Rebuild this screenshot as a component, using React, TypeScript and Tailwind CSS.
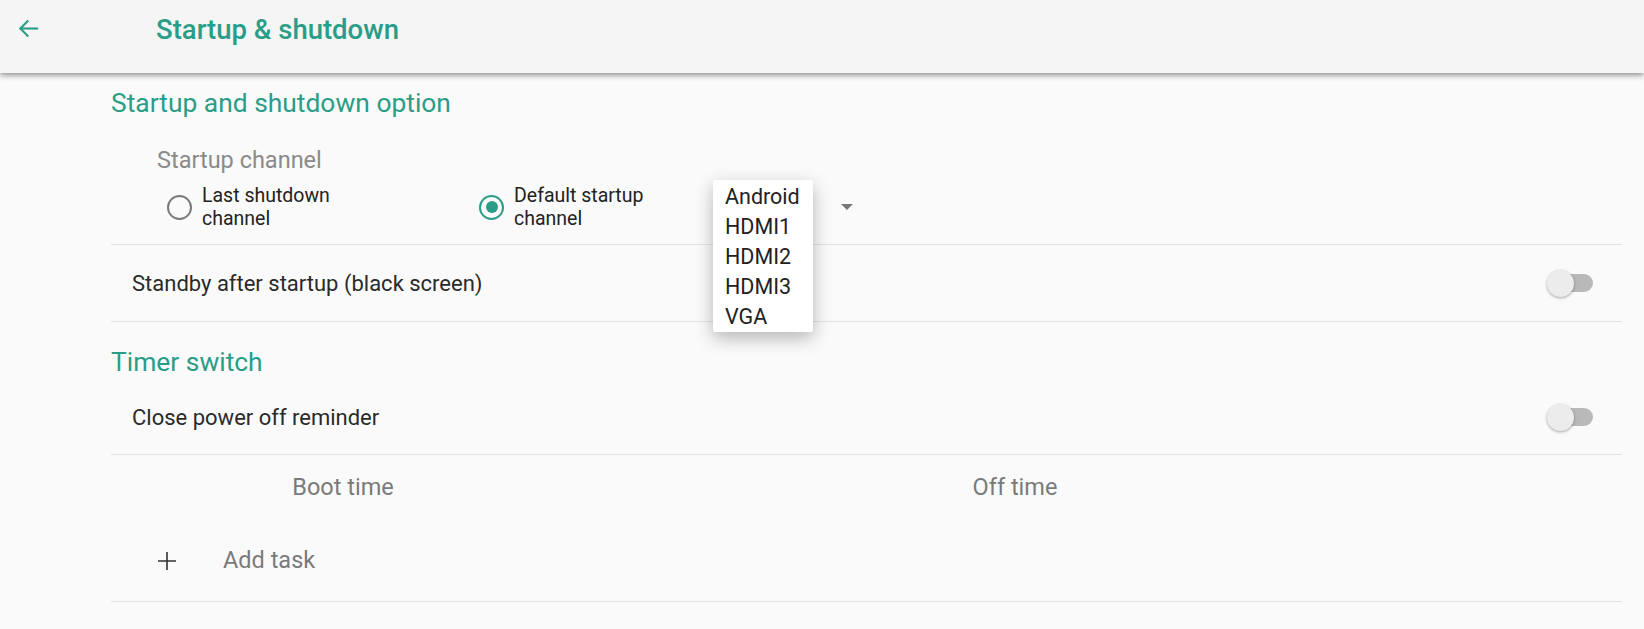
import React from 'react';

const teal = 'text-[#2a9d86]';

const Toggle: React.FC = () => (
  <div className="relative w-[46px] h-[28px] flex items-center">
    <div className="absolute right-0 w-[38px] h-[18px] rounded-full bg-[#b9b9b9]" />
    <div className="absolute left-0 w-[27px] h-[27px] rounded-full bg-[#ececec] shadow-[0_1px_3px_rgba(0,0,0,0.35)]" />
  </div>
);

const Divider: React.FC = () => <div className="h-px bg-[#e3e3e3]" />;

const Radio: React.FC<{ checked?: boolean; label: string[] }> = ({ checked, label }) => (
  <div className="flex items-center">
    <div
      className={
        checked
          ? 'w-[25px] h-[25px] rounded-full border-[2.5px] border-[#2a9d86] flex items-center justify-center'
          : 'w-[25px] h-[25px] rounded-full border-[2.5px] border-[#7a7a7a]'
      }
    >
      {checked && <div className="w-[12px] h-[12px] rounded-full bg-[#2a9d86]" />}
    </div>
    <div className="ml-[10px] text-[19.5px] leading-[23px] text-[#222]">
      {label.map(l => (
        <div key={l}>{l}</div>
      ))}
    </div>
  </div>
);

export default function App() {
  return (
    <div className="w-full h-[629px] bg-[#fafafa] overflow-hidden" style={{ fontFamily: 'Roboto, "Noto Sans", sans-serif' }}>
      {/* header */}
      <div className="relative z-10 h-[73px] bg-[#f5f5f5] shadow-[0_2px_6px_rgba(0,0,0,0.45)] flex items-center">
        <svg className="ml-[17px] mb-[16px]" width="23" height="23" viewBox="0 0 24 24" fill="none" stroke="#2a9d86" strokeWidth="2.2" strokeLinecap="square">
          <path d="M21 12H4" />
          <path d="M11 4.5L3.5 12L11 19.5" />
        </svg>
        <div className={`ml-[116px] mb-[14px] text-[27.5px] font-medium ${teal}`}>Startup &amp; shutdown</div>
      </div>

      <div className="ml-[111px] w-[1511px]">
        <div className={`pt-[15px] text-[26.4px] leading-[30px] ${teal}`}>Startup and shutdown option</div>

        <div className="mt-[29px] ml-[46px] text-[23.5px] leading-[26px] text-[#8a8a8a]">Startup channel</div>

        <div className="relative mt-[11px] mb-[14px] ml-[56px] flex items-center">
          <div className="w-[312px]">
            <Radio label={['Last shutdown', 'channel']} />
          </div>
          <div className="w-[234px]">
            <Radio checked label={['Default startup', 'channel']} />
          </div>
          <div className="w-[140px] h-[30px] flex items-center justify-end">
            <svg width="12" height="6" viewBox="0 0 12 6">
              <path d="M0 0H12L6 6Z" fill="#777" />
            </svg>
          </div>
          <div className="absolute z-20 left-[546px] top-[-4px] w-[100px] pt-[2px] bg-white shadow-[0_6px_18px_rgba(0,0,0,0.28)] rounded-[2px]">
            {['Android', 'HDMI1', 'HDMI2', 'HDMI3', 'VGA'].map(o => (
              <div key={o} className="pl-[12px] h-[30px] flex items-center text-[21.5px] text-[#222]">
                {o}
              </div>
            ))}
          </div>
        </div>

        <Divider />
        <div className="h-[76px] pl-[21px] pr-[29px] flex items-center justify-between">
          <span className="text-[22px] text-[#2a2a2a]">Standby after startup (black screen)</span>
          <Toggle />
        </div>
        <Divider />

        <div className={`pt-[25px] pb-[3px] text-[26.4px] leading-[30px] ${teal}`}>Timer switch</div>
        <div className="h-[74px] pl-[21px] pr-[29px] flex items-center justify-between">
          <span className="text-[22px] text-[#2a2a2a]">Close power off reminder</span>
          <Toggle />
        </div>
        <Divider />

        <div className="h-[65px] grid grid-cols-[464px_880px] items-center text-[23.5px] text-[#7a7a7a]">
          <div className="text-center">Boot time</div>
          <div className="text-center">Off time</div>
        </div>
        <div className="h-[81px] flex items-center">
          <svg className="ml-[47px]" width="18" height="18" viewBox="0 0 18 18" stroke="#333" strokeWidth="1.6">
            <path d="M9 0V18M0 9H18" />
          </svg>
          <span className="ml-[47px] text-[23.5px] text-[#7a7a7a]">Add task</span>
        </div>
        <Divider />
      </div>
    </div>
  );
}
